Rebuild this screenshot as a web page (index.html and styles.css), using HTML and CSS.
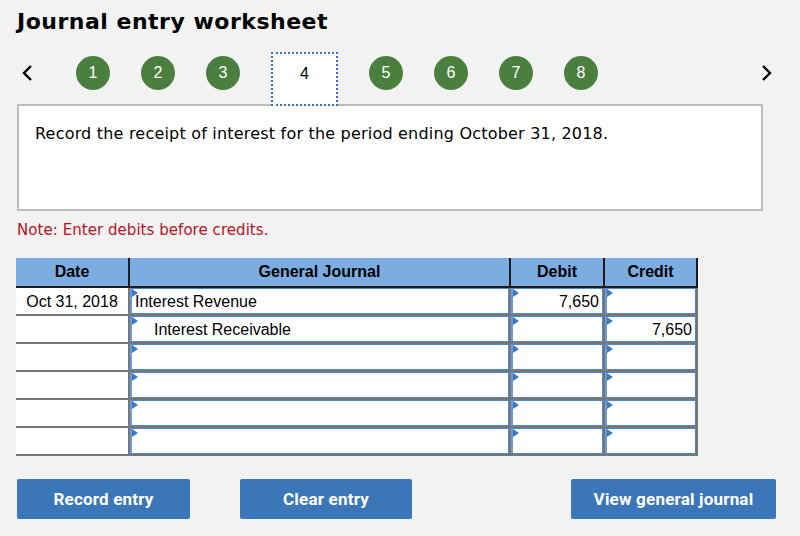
FILE: index.html
```html
<!DOCTYPE html>
<html lang="en">
<head>
<meta charset="utf-8">
<title>Journal entry worksheet</title>
<link rel="stylesheet" href="styles.css">
</head>
<body>
<div class="page">
  <h1 class="title">Journal entry worksheet</h1>

  <nav class="steps">
    <span class="arrow arrow-prev">
      <svg width="14" height="18" viewBox="0 0 14 18"><path d="M11 2 L4 9 L11 16" fill="none" stroke="#000" stroke-width="2.4"/></svg>
    </span>
    <span class="step done">1</span>
    <span class="step done">2</span>
    <span class="step done">3</span>
    <span class="step current">4</span>
    <span class="step done">5</span>
    <span class="step done">6</span>
    <span class="step done">7</span>
    <span class="step done">8</span>
    <span class="arrow arrow-next">
      <svg width="14" height="18" viewBox="0 0 14 18"><path d="M3 2 L10 9 L3 16" fill="none" stroke="#000" stroke-width="2.4"/></svg>
    </span>
  </nav>

  <div class="prompt">Record the receipt of interest for the period ending October 31, 2018.</div>

  <p class="note">Note: Enter debits before credits.</p>

  <div class="journal">
    <div class="th">Date</div>
    <div class="th">General Journal</div>
    <div class="th">Debit</div>
    <div class="th">Credit</div>

    <div class="td date">Oct 31, 2018</div>
    <div class="td"><div class="field text">Interest Revenue</div></div>
    <div class="td"><div class="field num">7,650</div></div>
    <div class="td"><div class="field num"></div></div>

    <div class="td date"></div>
    <div class="td"><div class="field text indent">Interest Receivable</div></div>
    <div class="td"><div class="field num"></div></div>
    <div class="td"><div class="field num">7,650</div></div>

    <div class="td date"></div>
    <div class="td"><div class="field text"></div></div>
    <div class="td"><div class="field num"></div></div>
    <div class="td"><div class="field num"></div></div>

    <div class="td date"></div>
    <div class="td"><div class="field text"></div></div>
    <div class="td"><div class="field num"></div></div>
    <div class="td"><div class="field num"></div></div>

    <div class="td date"></div>
    <div class="td"><div class="field text"></div></div>
    <div class="td"><div class="field num"></div></div>
    <div class="td"><div class="field num"></div></div>

    <div class="td date"></div>
    <div class="td"><div class="field text"></div></div>
    <div class="td"><div class="field num"></div></div>
    <div class="td"><div class="field num"></div></div>
  </div>

  <div class="actions">
    <button class="btn btn-record">Record entry</button>
    <button class="btn btn-clear">Clear entry</button>
    <button class="btn btn-view">View general journal</button>
  </div>
</div>
</body>
</html>
```

FILE: styles.css
```css
html, body {
  margin: 0;
  padding: 0;
  background: #f2f2f2;
}

.page {
  padding: 0 0 0 17px;
  width: 800px;
  height: 536px;
  box-sizing: border-box;
  overflow: hidden;
}

.title {
  margin: 0;
  padding-top: 9px;
  font-family: "DejaVu Sans", Verdana, sans-serif;
  font-weight: bold;
  font-size: 22px;
  letter-spacing: 0.5px;
  line-height: 26px;
  color: #000;
}

.steps {
  margin-top: 17px;
  height: 52px;
  display: flex;
  align-items: flex-start;
  gap: 31px;
  position: relative;
}

.arrow {
  display: flex;
  margin-top: 12px;
}

.arrow-prev {
  margin-left: 4px;
  width: 24px;
}

.arrow-prev svg {
  margin-left: -1px;
}

.arrow-next {
  margin-left: auto;
  margin-right: 26px;
}

.step {
  width: 34px;
  height: 34px;
  margin-top: 4px;
  display: flex;
  align-items: center;
  justify-content: center;
  font-family: "Liberation Sans", Arial, sans-serif;
  font-size: 16px;
  box-sizing: border-box;
}

.step.done {
  border-radius: 50%;
  background: #4b7f3f;
  color: #fff;
}

.step.current {
  width: 67px;
  height: 54px;
  margin-top: 0;
  margin-bottom: -2px;
  padding-bottom: 10px;
  background: #fff;
  color: #000;
  border: 2px dotted #3c6fc0;
  position: relative;
  z-index: 1;
}

.prompt {
  width: 746px;
  height: 107px;
  box-sizing: border-box;
  border: 2px solid #bcbcbc;
  background: #fff;
  padding: 18px 16px 0 16px;
  font-family: "DejaVu Sans", Verdana, sans-serif;
  font-size: 16px;
  letter-spacing: 0.2px;
  line-height: 19px;
  color: #000;
}

.note {
  margin: 10px 0 0 0;
  font-family: "DejaVu Sans", Verdana, sans-serif;
  font-size: 15px;
  letter-spacing: 0.05px;
  line-height: 19px;
  color: #b3151f;
}

.journal {
  margin: 18px 0 0 -1px;
  display: grid;
  grid-template-columns: 114px 381px 94px 93px;
  grid-template-rows: 30px;
  grid-auto-rows: 28px;
  width: 682px;
  font-family: "Liberation Sans", Arial, sans-serif;
  font-size: 16px;
  color: #000;
}

.th {
  box-sizing: border-box;
  background: #7badE2;
  border-right: 2px solid #1c1c1c;
  border-bottom: 2px solid #1c1c1c;
  display: flex;
  align-items: center;
  justify-content: center;
  font-weight: bold;
}

.td {
  box-sizing: border-box;
  background: #fff;
  border-right: 2px solid #777;
  border-bottom: 2px solid #777;
}

.td.date {
  display: flex;
  align-items: center;
  justify-content: center;
  padding-top: 1px;
}

.field {
  height: 100%;
  box-sizing: border-box;
  border: 1px solid #4f86c6;
  border-left: 2px solid #6d9dd6;
  position: relative;
  display: flex;
  align-items: center;
  padding-top: 1px;
  background: #fff;
}

.field::before {
  content: "";
  position: absolute;
  left: 0;
  top: 0;
  width: 0;
  height: 0;
  border-left: 6px solid #3a77c0;
  border-top: 4px solid transparent;
  border-bottom: 4px solid transparent;
}

.field.text {
  padding-left: 3px;
}

.field.text.indent {
  padding-left: 22px;
}

.field.num {
  justify-content: flex-end;
  padding-right: 3px;
}

.actions {
  margin-top: 23px;
  display: flex;
  gap: 50px;
  width: 759px;
}

.btn {
  height: 40px;
  border: none;
  border-radius: 2px;
  background: #3b76b8;
  color: #fff;
  font-family: Roboto, "Liberation Sans", sans-serif;
  font-weight: bold;
  font-size: 17px;
  letter-spacing: 0.2px;
  padding: 0;
}

.btn-record {
  width: 173px;
}

.btn-clear {
  width: 172px;
}

.btn-view {
  width: 205px;
  margin-left: auto;
}
```
